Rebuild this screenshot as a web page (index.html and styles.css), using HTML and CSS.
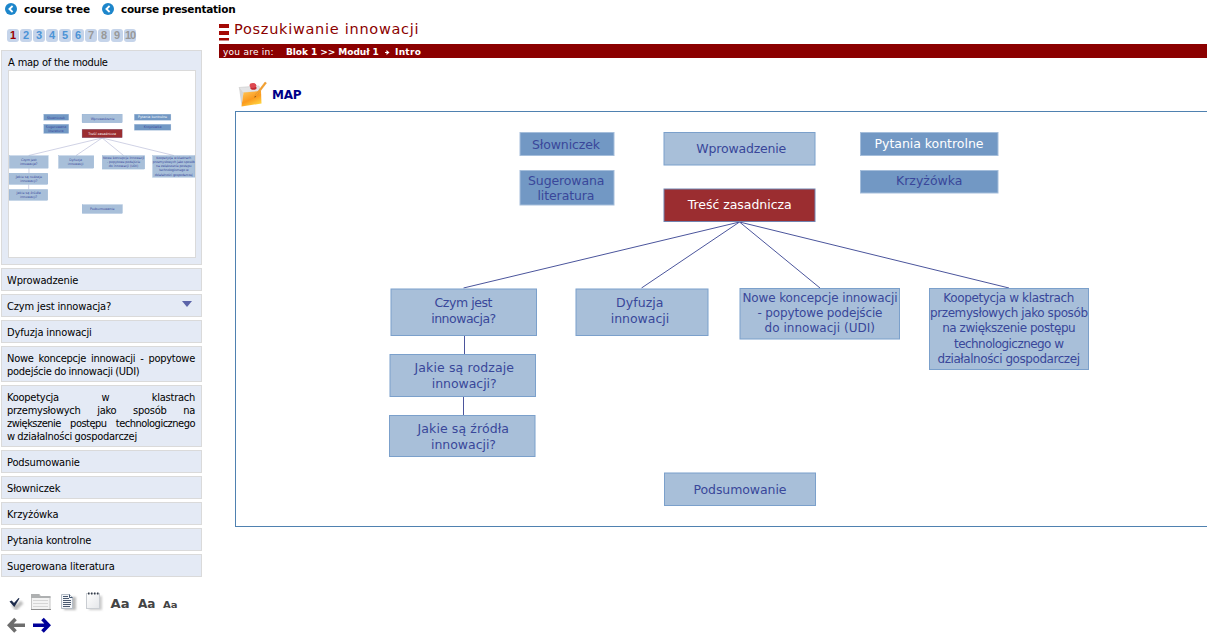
FILE: index.html
```
<!DOCTYPE html>
<html lang="pl">
  <head>
    <meta charset="UTF-8" />
    <title>Poszukiwanie innowacji</title>
    <link rel="stylesheet" href="styles.css">
  </head>
  <body>
    <div class="page">
      <div class="left">
        <div class="top-links">
          <a class="top-link">
            <svg width="12" height="12" viewBox="0 0 12 12"><circle cx="6" cy="6" r="6" fill="#1d86cb"/><path d="M7.6 3 4.4 6l3.2 3" fill="none" stroke="#fff" stroke-width="1.8"/></svg>
            <span class="link-tree">course tree</span>
          </a>
          <a class="top-link">
            <svg width="12" height="12" viewBox="0 0 12 12"><circle cx="6" cy="6" r="6" fill="#1d86cb"/><path d="M7.6 3 4.4 6l3.2 3" fill="none" stroke="#fff" stroke-width="1.8"/></svg>
            <span class="link-pres">course presentation</span>
          </a>
        </div>

        <div class="numbers">
          <span class="current">1</span><span>2</span><span>3</span><span>4</span><span>5</span><span>6</span><span class="off">7</span><span class="off">8</span><span class="off">9</span><span class="off ten">10</span>
        </div>

        <div class="menu">
          <div class="map-box">
            <div class="map-title">A map of the module</div>
            <div class="thumb">
              <svg width="186" height="186" viewBox="389.5 -29.6 699 699"><use href="#module-map"/></svg>
            </div>
          </div>
          <div class="item">Wprowadzenie</div>
          <div class="item has-arrow"><span>Czym jest innowacja?</span>
            <svg width="10" height="6" viewBox="0 0 10 6"><path d="M0 0h10L5 6z" fill="#5b64a9"/></svg>
          </div>
          <div class="item">Dyfuzja innowacji</div>
          <div class="item long">Nowe koncepcje innowacji - popytowe podejście do innowacji (UDI)</div>
          <div class="item long">
            <span class="line">Koopetycja w klastrach</span>
            <span class="line">przemysłowych jako sposób na</span>
            <span class="line tight">zwiększenie postępu technologicznego</span>
            w działalności gospodarczej
          </div>
          <div class="item">Podsumowanie</div>
          <div class="item">Słowniczek</div>
          <div class="item">Krzyżówka</div>
          <div class="item">Pytania kontrolne</div>
          <div class="item">Sugerowana literatura</div>
        </div>

        <svg class="tools" width="202" height="46" viewBox="0 590 202 46">
          <defs>
            <filter id="soft" x="-30%" y="-30%" width="160%" height="160%"><feGaussianBlur stdDeviation="1.2"/></filter>
            <linearGradient id="paper" x1="0" y1="0" x2="1" y2="1"><stop offset="0" stop-color="#fff"/><stop offset="1" stop-color="#e4e6e9"/></linearGradient>
          </defs>
          <!-- check -->
          <path d="M13 604l3 4 6-6" fill="none" stroke="#bbb" stroke-width="4" filter="url(#soft)"/>
          <path d="M9.5 601.5l2.2-1 2.3 2.6 4.5-5 1 .4-5.2 8.5z" fill="#1d2b4c"/>
          <!-- window -->
          <path d="M31.500 594.500h8l1 2h9.500v13H31.500z" fill="#f3f3f3" stroke="#c4c4c4"/>
          <path d="M31 594h8l1 2h10.500v2H31z" fill="#aeb0b1"/>
          <path d="M33 600.500h15M33 603.500h15M33 606.500h15" stroke="#d6d6d6"/>
          <path d="M31 609.500h20" stroke="#8e8e8e"/>
          <!-- document -->
          <path d="M64 597h12v13H64z" fill="#bbb" filter="url(#soft)"/>
          <path d="M61.500 594.500h8l3 3v11h-11z" fill="#f4f6f9" stroke="#b5bdc7"/>
          <path d="M63 596.500h5M63 598.500h6M63 600.500h8M63 602.500h8M63 604.500h8M63 606.500h7" stroke="#4a5970"/>
          <path d="M69.500 594.500v3h3" fill="none" stroke="#435672"/>
          <!-- notepad -->
          <path d="M89 596h13v14H89z" fill="#ccc" filter="url(#soft)"/>
          <rect x="86.500" y="593.500" width="13" height="15" fill="url(#paper)" stroke="#c9cdd2"/>
          <path d="M88 593.500h11" stroke="#333b49" stroke-width="2" stroke-dasharray="1.500 1.500"/>
          <!-- font sizes -->
          <g class="font-size">
            <text x="110.500" y="608" font-size="13" textLength="19" lengthAdjust="spacingAndGlyphs">Aa</text>
            <text x="138" y="608" font-size="12" textLength="17.500" lengthAdjust="spacingAndGlyphs">Aa</text>
            <text x="163" y="608" font-size="9.500" textLength="14.500" lengthAdjust="spacingAndGlyphs">Aa</text>
          </g>
          <!-- previous / next -->
          <path d="M15.500 619l-6 6.200 6 6.300M9.500 625.200H25" fill="none" stroke="#6d6d6d" stroke-width="3.600"/>
          <path d="M42.500 619l6 6.200-6 6.300M48.500 625.200H33" fill="none" stroke="#000099" stroke-width="3.600"/>
        </svg>
      </div>

      <div class="main">
        <div class="title">
          <svg width="10" height="17" viewBox="0 0 10 17"><path d="M0 0h10v4H0zM0 7h10v4H0zM0 14h10v2.500H0z" fill="#a40a05"/></svg>
          <h1>Poszukiwanie innowacji</h1>
        </div>
        <div class="crumbs">
          <span class="here">you are in:</span>
          <b class="path">Blok 1 &gt;&gt; Moduł 1</b>
          <svg width="5" height="5" viewBox="0 0 5 5"><path d="M0 2.500h2" stroke="#fff"/><path d="M1.500 0 4.500 2.500 1.500 5z" fill="#fff"/></svg>
          <b class="intro">Intro</b>
        </div>
        <div class="map-head">
          <svg width="30" height="28" viewBox="238 80 30 28">
            <defs>
              <linearGradient id="note" x1="0" y1="0" x2=".6" y2="1"><stop offset="0" stop-color="#ffc95c"/><stop offset=".6" stop-color="#fb9a1e"/><stop offset="1" stop-color="#ffd23f"/></linearGradient>
            </defs>
            <path d="M239 87.500l20-1.500 1 5-17.500 2z" fill="#e3e4e6" stroke="#cfcfcf" stroke-width=".7"/>
            <path d="M239 87.500l2.500 18.500 2-13z" fill="#d5d5d5"/>
            <path d="M243.500 92.500l17.500-1.500 .5 12.500-20 3z" fill="url(#note)"/>
            <path d="M254.500 97.500l1-3 9.500-12.500 1.500 1-9.500 12.500z" fill="#f7a12c" stroke="#d98a20" stroke-width=".4"/>
            <path d="M254.500 97.500l.5-1.600 1 .8z" fill="#5d3a12"/>
            <ellipse cx="253.500" cy="88" rx="3.200" ry="1.800" fill="#c22a30"/>
            <ellipse cx="253" cy="85.500" rx="3.400" ry="2.400" fill="#dd4850"/>
          </svg>
          <h2>MAP</h2>
        </div>
        <div class="map-panel">
          <svg width="971" height="414" viewBox="236 112 971 414">
            <g id="module-map">
              <g class="lines">
                <path d="M739.500 222 463.500 288M739.500 222 641.500 288M739.500 222 820 288M739.500 222 1009 288M464.500 336v18M463.500 397v18"/>
              </g>
              <g class="dark">
                <rect x="520" y="132.500" width="94" height="23"/>
                <rect x="520" y="170.500" width="94" height="34.500"/>
                <rect x="860.500" y="132.500" width="137.500" height="23"/>
                <rect x="860.500" y="170.500" width="137.500" height="22.500"/>
              </g>
              <rect class="red" x="664" y="189" width="151" height="32.500"/>
              <g class="light">
                <rect x="664" y="132.500" width="151" height="32.500"/>
                <rect x="391" y="289" width="145.500" height="46.500"/>
                <rect x="390" y="354.500" width="145.500" height="42"/>
                <rect x="389.500" y="415.500" width="145.500" height="41"/>
                <rect x="576" y="289" width="132" height="46.500"/>
                <rect x="740" y="288.500" width="159.500" height="50.500"/>
                <rect x="929.500" y="288.500" width="159" height="81"/>
                <rect x="664.500" y="473" width="151" height="32.500"/>
              </g>
              <g class="labels">
                <text x="532" y="149.300" textLength="68">Słowniczek</text>
                <text x="528" y="185.300" textLength="76.500">Sugerowana</text>
                <text x="537.500" y="200.300" textLength="57">literatura</text>
                <text x="696.300" y="153" textLength="90">Wprowadzenie</text>
                <text class="white" x="687.700" y="209.300" textLength="104">Treść zasadnicza</text>
                <text class="white" x="874.500" y="148" textLength="109">Pytania kontrolne</text>
                <text x="896" y="185.200" textLength="66.500">Krzyżówka</text>
                <text x="434.500" y="307.200" textLength="58">Czym jest</text>
                <text x="431.200" y="322.600" textLength="65">innowacja?</text>
                <text x="414.500" y="372.400" textLength="99.500">Jakie są rodzaje</text>
                <text x="431.700" y="388" textLength="65">innowacji?</text>
                <text x="417.500" y="433.400" textLength="91.500">Jakie są źródła</text>
                <text x="431" y="449" textLength="65">innowacji?</text>
                <text x="616" y="307.200" textLength="47.500">Dyfuzja</text>
                <text x="610.700" y="322.600" textLength="58.500">innowacji</text>
                <g class="small">
                  <text x="742.500" y="302" textLength="155">Nowe koncepcje innowacji</text>
                  <text x="757.500" y="317.300" textLength="125">- popytowe podejście</text>
                  <text x="764.500" y="332.400" textLength="110.500">do innowacji (UDI)</text>
                  <text x="943.300" y="302" textLength="131">Koopetycja w klastrach</text>
                  <text x="930" y="317.300" textLength="158">przemysłowych jako sposób</text>
                  <text x="942.200" y="332.400" textLength="133.500">na zwiększenie postępu</text>
                  <text x="954" y="347.800" textLength="110">technologicznego w</text>
                  <text x="937.500" y="363.200" textLength="142.500">działalności gospodarczej</text>
                </g>
                <text x="693.500" y="494" textLength="93">Podsumowanie</text>
              </g>
            </g>
          </svg>
        </div>
      </div>
    </div>
  </body>
</html>
```
FILE: styles.css
```
body {
  margin: 0;
  background: #fff;
  font-family: "DejaVu Sans Condensed", "DejaVu Sans", sans-serif;
  font-size: 11px;
  line-height: 13px;
  color: #000;
  overflow: hidden;
}
svg {
  display: block;
  flex: none;
}
.page {
  display: flex;
  height: 637px;
}
.left {
  width: 202px;
  flex: none;
}
.top-links {
  display: flex;
  gap: 12px;
  height: 18px;
  padding: 3px 0 0 5px;
  box-sizing: border-box;
  white-space: nowrap;
}
.top-link {
  display: flex;
  gap: 7px;
  font-family: "DejaVu Sans", sans-serif;
  font-weight: bold;
  font-size: 10.5px;
}
.link-tree {
  letter-spacing: -0.15px;
}
.link-pres {
  letter-spacing: -0.25px;
}

/* page numbers */
.numbers {
  display: flex;
  gap: 1px;
  height: 32px;
  padding: 11px 0 0 7px;
  box-sizing: border-box;
  font: bold 11px/13px "Liberation Sans", sans-serif;
  text-align: center;
  color: #4b93d6;
}
.numbers span {
  width: 12px;
  height: 13px;
  border-radius: 3px;
  background: #c5d4ea;
}
.numbers .current {
  color: #990000;
}
.numbers .off {
  color: #999;
}
.numbers .ten {
  letter-spacing: -1px;
}

/* side menu */
.menu {
  display: flex;
  flex-direction: column;
  gap: 3px;
  width: 201px;
  margin-left: 1px;
}
.map-box,
.item {
  box-sizing: border-box;
  border: 1px solid #dadada;
  background: #e4eaf5;
  letter-spacing: -0.13px;
}
.map-box {
  height: 215px;
  padding: 5px 5px 0 6px;
}
.map-title {
  height: 14px;
  letter-spacing: -0.35px;
  word-spacing: 0.5px;
}
.thumb {
  width: 186px;
  height: 186px;
  border: 1px solid #dadada;
  background: #fff;
}
.item {
  padding: 5px 6px 3px 5px;
  text-align: justify;
}
.long {
  letter-spacing: -0.25px;
  word-spacing: -0.4px;
}
.line {
  display: block;
  text-align-last: justify;
  white-space: nowrap;
}
.tight {
  letter-spacing: -0.5px;
}
.has-arrow {
  display: flex;
  justify-content: space-between;
  padding-right: 9px;
}
.has-arrow svg {
  margin-top: 1px;
}
.tools {
  margin-top: 13px;
}
.font-size {
  font-family: "DejaVu Sans", sans-serif;
  font-weight: bold;
  fill: #444;
}

/* content */
.main {
  flex: 1;
  min-width: 0;
  margin-left: 17px;
}
.title {
  display: flex;
  gap: 5px;
  height: 44px;
  padding-top: 24px;
  box-sizing: border-box;
}
h1 {
  margin: -4px 0 0;
  font: 14.5px/18px "DejaVu Sans", sans-serif;
  letter-spacing: 0.72px;
  color: #8b0000;
}
.crumbs {
  display: flex;
  align-items: center;
  height: 14px;
  padding: 2px 0 0 4px;
  box-sizing: border-box;
  background: #8b0000;
  color: #fff;
  font: 9px/12px "DejaVu Sans", sans-serif;
}
.here {
  width: 63px;
  letter-spacing: 0.25px;
}
.path {
  width: 99px;
  letter-spacing: -0.05px;
}
.intro {
  margin-left: 5px;
  letter-spacing: 0.3px;
}
.map-head {
  display: flex;
  gap: 4px;
  padding: 22px 0 0 19px;
  height: 53px;
  box-sizing: border-box;
}
h2 {
  margin: 8px 0 0;
  font: bold 12px/15px "DejaVu Sans", sans-serif;
  letter-spacing: -0.3px;
  color: #000088;
}
.map-panel {
  height: 414px;
  margin-left: 16px;
  border: 1px solid #4f81b0;
  border-right: none;
  overflow: hidden;
}

/* map */
.lines {
  fill: none;
  stroke: #4b559c;
}
.dark {
  fill: #7298c4;
  stroke: #a5bedb;
}
.light {
  fill: #a8bfd9;
  stroke: #7ba0cb;
}
.red {
  fill: #9b2d30;
  stroke: #7183b0;
}
.labels {
  font: 12.5px "DejaVu Sans", sans-serif;
  fill: #39479a;
}
.labels .small {
  font-size: 12px;
}
.labels .white {
  fill: #fff;
}
```
